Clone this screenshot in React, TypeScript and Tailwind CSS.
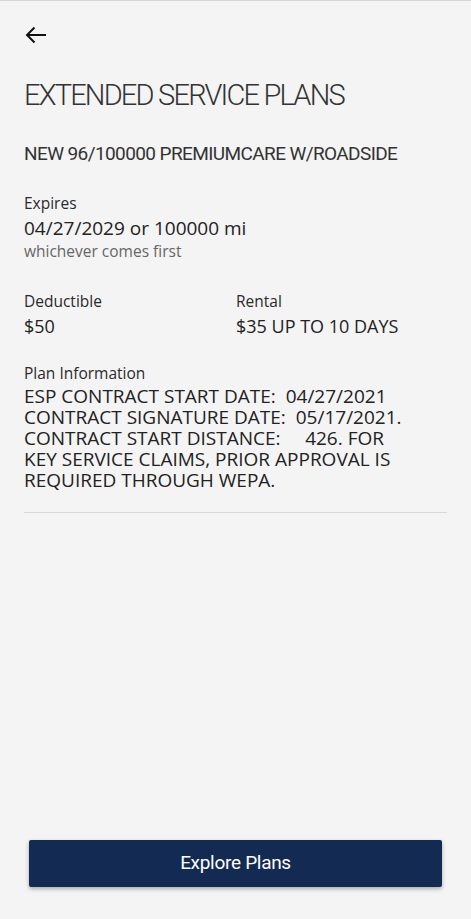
const body = { fontFamily: '"Open Sans", "Liberation Sans", sans-serif' };
const narrow = { fontFamily: 'Roboto, "Liberation Sans", sans-serif' };

function BackArrow() {
  return (
    <svg width="22" height="18" viewBox="0 0 22 18" fill="none" stroke="#111" strokeWidth="2" strokeLinecap="butt">
      <path d="M21 9H2.5" />
      <path d="M9.5 1.5L2 9l7.5 7.5" />
    </svg>
  );
}

function Field({ label, value, className = '' }: { label: string; value: string; className?: string }) {
  return (
    <div className={className}>
      <div className="text-[15.5px] leading-[20px] text-[#2a2a2a]">{label}</div>
      <div className="mt-[4px] text-[18px] leading-[22px] text-[#222]">{value}</div>
    </div>
  );
}

export default function App() {
  return (
    <div className="flex h-[919px] w-[471px] flex-col border-t border-[#d6d6d6] bg-[#f4f4f4]" style={body}>
      <div className="flex-1 px-6">
        <button className="mt-[25px] ml-[1px] flex items-center">
          <BackArrow />
        </button>

        <h1 className="mt-[31px] text-[29px] font-light leading-[40px] tracking-[-1.8px] text-[#333]" style={narrow}>
          EXTENDED SERVICE PLANS
        </h1>

        <h2 className="mt-[26px] text-[19px] leading-[26px] tracking-[-0.6px] text-[#333]" style={narrow}>
          NEW 96/100000 PREMIUMCARE W/ROADSIDE
        </h2>

        <div className="mt-[26px]">
          <div className="text-[15.5px] leading-[20px] text-[#2a2a2a]">Expires</div>
          <div className="mt-[4px] text-[19px] leading-[22px] text-[#222]">04/27/2029 or 100000 mi</div>
          <div className="mt-[2px] text-[15.5px] leading-[20px] text-[#666]">whichever comes first</div>
        </div>

        <div className="mt-[30px] flex">
          <Field label="Deductible" value="$50" className="w-[212px]" />
          <Field label="Rental" value="$35 UP TO 10 DAYS" />
        </div>

        <div className="mt-[26px]">
          <div className="text-[15.5px] leading-[20px] text-[#2a2a2a]">Plan Information</div>
          <p className="mt-[3px] whitespace-pre-wrap text-[19px] leading-[21px] text-[#222]">
            {'ESP CONTRACT START DATE:  04/27/2021\nCONTRACT SIGNATURE DATE:  05/17/2021.\nCONTRACT START DISTANCE:     426. FOR\nKEY SERVICE CLAIMS, PRIOR APPROVAL IS\nREQUIRED THROUGH WEPA.'}
          </p>
        </div>

        <div className="mt-[21px] h-px bg-[#d9d9d9]" />
      </div>

      <div className="px-[29px] pb-[32px]">
        <button
          className="flex h-[47px] w-full items-center justify-center rounded-[2px] bg-[#132a52] text-[19px] tracking-[-0.3px] text-white shadow-[0_2px_4px_rgba(0,0,0,0.3)]"
          style={narrow}
        >
          Explore Plans
        </button>
      </div>
    </div>
  );
}
